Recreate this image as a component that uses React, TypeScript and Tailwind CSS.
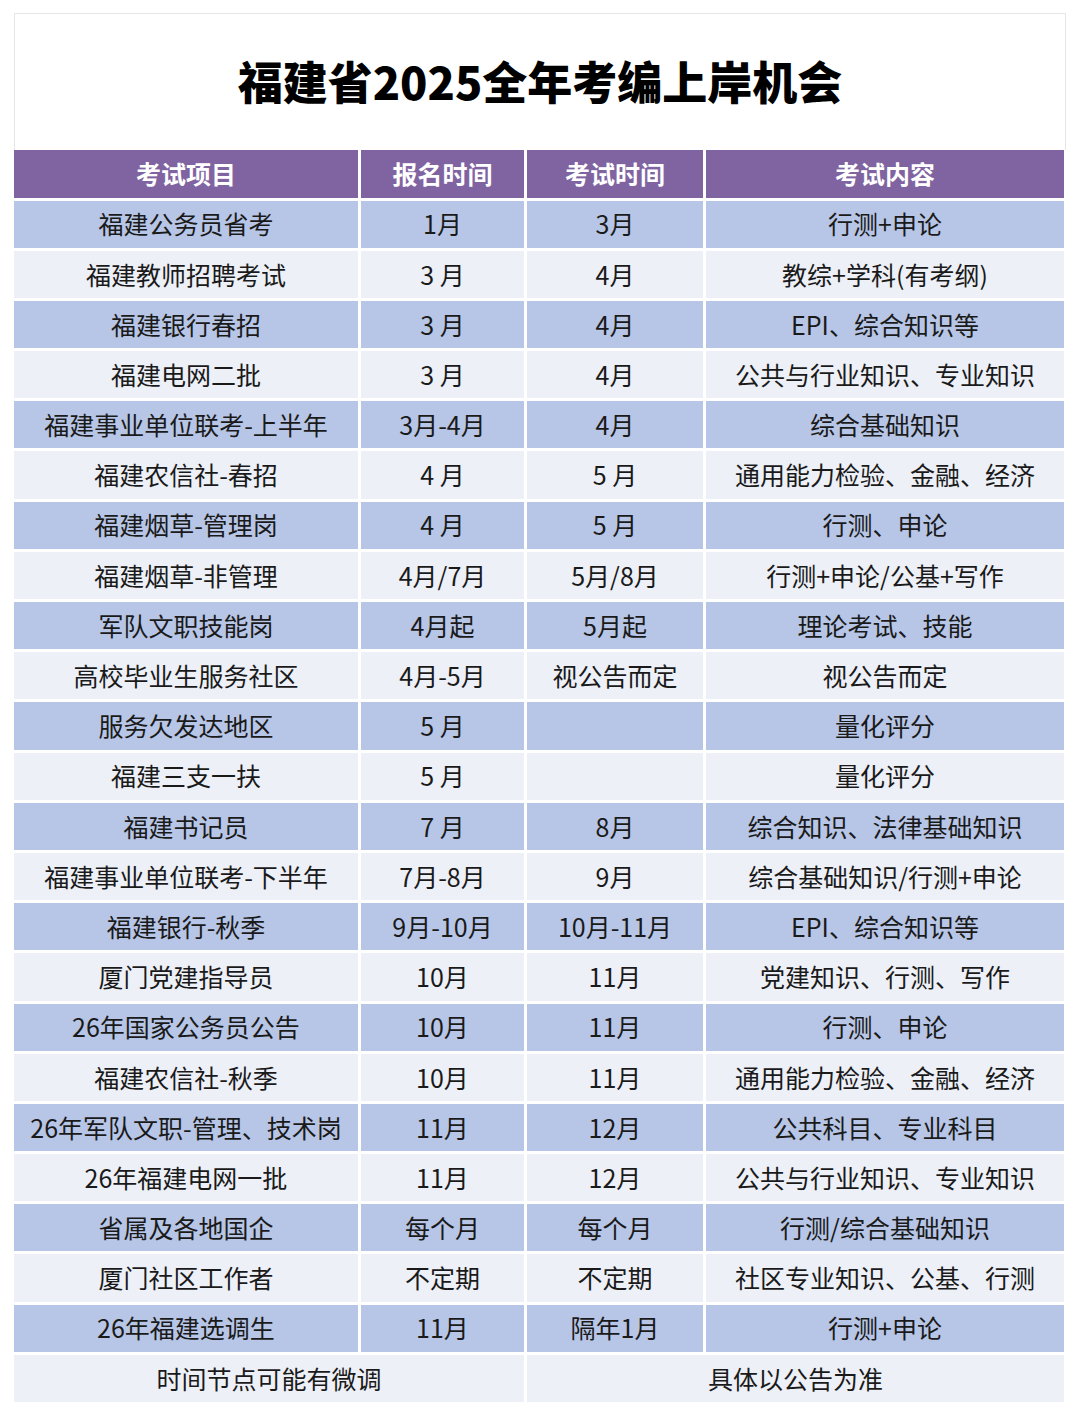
const rows: [string, string, string, string][] = [
  ["福建公务员省考", "1月", "3月", "行测+申论"],
  ["福建教师招聘考试", "3 月", "4月", "教综+学科(有考纲)"],
  ["福建银行春招", "3 月", "4月", "EPI、综合知识等"],
  ["福建电网二批", "3 月", "4月", "公共与行业知识、专业知识"],
  ["福建事业单位联考-上半年", "3月-4月", "4月", "综合基础知识"],
  ["福建农信社-春招", "4 月", "5 月", "通用能力检验、金融、经济"],
  ["福建烟草-管理岗", "4 月", "5 月", "行测、申论"],
  ["福建烟草-非管理", "4月/7月", "5月/8月", "行测+申论/公基+写作"],
  ["军队文职技能岗", "4月起", "5月起", "理论考试、技能"],
  ["高校毕业生服务社区", "4月-5月", "视公告而定", "视公告而定"],
  ["服务欠发达地区", "5 月", "", "量化评分"],
  ["福建三支一扶", "5 月", "", "量化评分"],
  ["福建书记员", "7 月", "8月", "综合知识、法律基础知识"],
  ["福建事业单位联考-下半年", "7月-8月", "9月", "综合基础知识/行测+申论"],
  ["福建银行-秋季", "9月-10月", "10月-11月", "EPI、综合知识等"],
  ["厦门党建指导员", "10月", "11月", "党建知识、行测、写作"],
  ["26年国家公务员公告", "10月", "11月", "行测、申论"],
  ["福建农信社-秋季", "10月", "11月", "通用能力检验、金融、经济"],
  ["26年军队文职-管理、技术岗", "11月", "12月", "公共科目、专业科目"],
  ["26年福建电网一批", "11月", "12月", "公共与行业知识、专业知识"],
  ["省属及各地国企", "每个月", "每个月", "行测/综合基础知识"],
  ["厦门社区工作者", "不定期", "不定期", "社区专业知识、公基、行测"],
  ["26年福建选调生", "11月", "隔年1月", "行测+申论"],
];

const headers = ["考试项目", "报名时间", "考试时间", "考试内容"];

export default function App() {
  return (
    <div
      className="w-[1080px] h-[1413px] bg-white pt-[13px] pl-[14px] pr-[14px]"
      style={{ fontFamily: '"Noto Sans CJK SC", "Noto Sans", sans-serif' }}
    >
      <div className="w-[1052px] h-[137px] border border-b-0 border-[#e6e6e6] flex items-center justify-center">
        <h1 className="text-[45px] font-black text-black leading-none pb-[4px]">
          福建省2025全年考编上岸机会
        </h1>
      </div>
      <div className="w-[1050px] grid grid-cols-[344px_163px_176px_358px] gap-[3px] bg-white">
        {headers.map((h) => (
          <div
            key={h}
            className="h-[47.5px] bg-[#8064a2] text-white font-bold text-[25px] flex items-center justify-center"
          >
            {h}
          </div>
        ))}
        {rows.map((r, i) =>
          r.map((c, j) => (
            <div
              key={`${i}-${j}`}
              className={`h-[47.2px] flex items-center justify-center text-[25px] text-[#1a1a1a] ${
                i % 2 === 0 ? "bg-[#b7c6e6]" : "bg-[#edf0f7]"
              }`}
            >
              {c}
            </div>
          ))
        )}
        <div className="col-span-2 h-[47.2px] bg-[#edf0f7] flex items-center justify-center text-[25px] text-[#1a1a1a]">
          时间节点可能有微调
        </div>
        <div className="col-span-2 h-[47.2px] bg-[#edf0f7] flex items-center justify-center text-[25px] text-[#1a1a1a]">
          具体以公告为准
        </div>
      </div>
    </div>
  );
}
